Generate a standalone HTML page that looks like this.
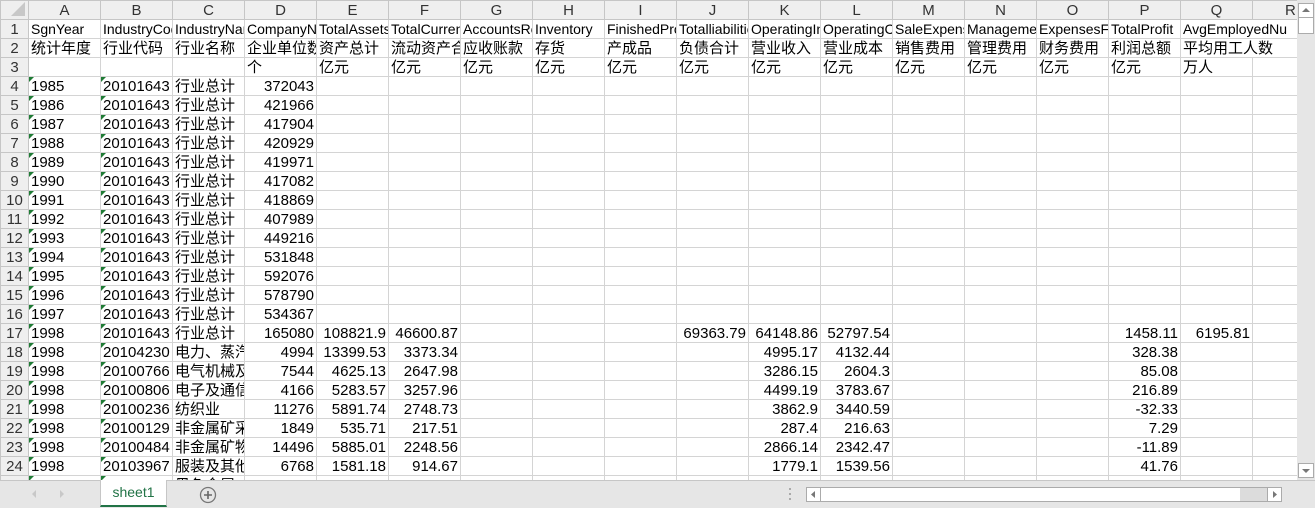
<!DOCTYPE html>
<html><head><meta charset="utf-8">
<style>
*{box-sizing:border-box;margin:0;padding:0}
body{width:1315px;height:508px;overflow:hidden;background:#fff;font-family:"Liberation Sans","Noto Sans CJK SC",sans-serif;font-size:14px;color:#000;position:relative}
#grid{position:absolute;left:0;top:0;width:1297px;height:480px;overflow:hidden}
table{border-collapse:collapse;table-layout:fixed;width:1324px}
td{height:19px;border:1px solid #d4d4d4;white-space:nowrap;overflow:hidden;padding:0 2px;line-height:17px;position:relative}
tr.h td{height:19px;background:#efefef;color:#333;text-align:center;border-color:#c6c6c6;font-size:15px}
td.rn{background:#efefef;color:#333;text-align:center;border-color:#c6c6c6;padding:0;font-size:15px}
td.r{text-align:right;font-size:15px;padding-right:2px}
td.g::before{content:"";position:absolute;left:0;top:0;border-top:5px solid #1e7b34;border-right:5px solid transparent}
.c{font-size:15px}
.n{font-size:15px}
#bar{position:absolute;left:0;top:480px;width:1315px;height:28px;background:#e6e6e6;border-top:1px solid #c6c6c6}
#tab{position:absolute;left:100px;top:-1px;width:67px;height:27px;background:#fff;border-left:1px solid #c6c6c6;border-right:1px solid #c6c6c6;border-bottom:2px solid #217346;color:#217346;font-size:14px;text-align:center;line-height:24px}
#vs{position:absolute;left:1297px;top:0;width:18px;height:480px;background:#e6e6e6}
.btn{position:absolute;background:#fff;border:1px solid #ababab}
</style></head><body>
<div id="grid"><table>
<colgroup><col style="width:28px"><col style="width:72px"><col style="width:72px"><col style="width:72px"><col style="width:72px"><col style="width:72px"><col style="width:72px"><col style="width:72px"><col style="width:72px"><col style="width:72px"><col style="width:72px"><col style="width:72px"><col style="width:72px"><col style="width:72px"><col style="width:72px"><col style="width:72px"><col style="width:72px"><col style="width:72px"><col style="width:72px"></colgroup>
<tr class="h"><td style="background:#efefef"><svg width="14" height="14" style="position:absolute;right:3px;bottom:3px"><polygon points="14,0 14,14 0,14" fill="#c8c8c8"/></svg></td><td>A</td><td>B</td><td>C</td><td>D</td><td>E</td><td>F</td><td>G</td><td>H</td><td>I</td><td>J</td><td>K</td><td>L</td><td>M</td><td>N</td><td>O</td><td>P</td><td>Q</td><td style="text-align:left;padding-left:32px">R</td></tr>
<tr><td class="rn">1</td><td>SgnYear</td><td>IndustryCode</td><td>IndustryName</td><td>CompanyNum</td><td>TotalAssets</td><td>TotalCurrentAssets</td><td>AccountsReceivable</td><td>Inventory</td><td>FinishedProducts</td><td>Totalliabilities</td><td>OperatingIncome</td><td>OperatingCost</td><td>SaleExpenses</td><td>ManagementExpenses</td><td>ExpensesFinance</td><td>TotalProfit</td><td colspan="2">AvgEmployedNu</td></tr>
<tr class="c"><td class="rn">2</td><td>统计年度</td><td>行业代码</td><td>行业名称</td><td>企业单位数</td><td>资产总计</td><td>流动资产合计</td><td>应收账款</td><td>存货</td><td>产成品</td><td>负债合计</td><td>营业收入</td><td>营业成本</td><td>销售费用</td><td>管理费用</td><td>财务费用</td><td>利润总额</td><td colspan="2">平均用工人数</td></tr>
<tr class="c"><td class="rn">3</td><td></td><td></td><td></td><td>个</td><td>亿元</td><td>亿元</td><td>亿元</td><td>亿元</td><td>亿元</td><td>亿元</td><td>亿元</td><td>亿元</td><td>亿元</td><td>亿元</td><td>亿元</td><td>亿元</td><td>万人</td><td></td></tr>
<tr class="c"><td class="rn">4</td><td class="g n">1985</td><td class="g n">20101643</td><td>行业总计</td><td class="r">372043</td><td></td><td></td><td></td><td></td><td></td><td></td><td></td><td></td><td></td><td></td><td></td><td></td><td></td><td></td></tr>
<tr class="c"><td class="rn">5</td><td class="g n">1986</td><td class="g n">20101643</td><td>行业总计</td><td class="r">421966</td><td></td><td></td><td></td><td></td><td></td><td></td><td></td><td></td><td></td><td></td><td></td><td></td><td></td><td></td></tr>
<tr class="c"><td class="rn">6</td><td class="g n">1987</td><td class="g n">20101643</td><td>行业总计</td><td class="r">417904</td><td></td><td></td><td></td><td></td><td></td><td></td><td></td><td></td><td></td><td></td><td></td><td></td><td></td><td></td></tr>
<tr class="c"><td class="rn">7</td><td class="g n">1988</td><td class="g n">20101643</td><td>行业总计</td><td class="r">420929</td><td></td><td></td><td></td><td></td><td></td><td></td><td></td><td></td><td></td><td></td><td></td><td></td><td></td><td></td></tr>
<tr class="c"><td class="rn">8</td><td class="g n">1989</td><td class="g n">20101643</td><td>行业总计</td><td class="r">419971</td><td></td><td></td><td></td><td></td><td></td><td></td><td></td><td></td><td></td><td></td><td></td><td></td><td></td><td></td></tr>
<tr class="c"><td class="rn">9</td><td class="g n">1990</td><td class="g n">20101643</td><td>行业总计</td><td class="r">417082</td><td></td><td></td><td></td><td></td><td></td><td></td><td></td><td></td><td></td><td></td><td></td><td></td><td></td><td></td></tr>
<tr class="c"><td class="rn">10</td><td class="g n">1991</td><td class="g n">20101643</td><td>行业总计</td><td class="r">418869</td><td></td><td></td><td></td><td></td><td></td><td></td><td></td><td></td><td></td><td></td><td></td><td></td><td></td><td></td></tr>
<tr class="c"><td class="rn">11</td><td class="g n">1992</td><td class="g n">20101643</td><td>行业总计</td><td class="r">407989</td><td></td><td></td><td></td><td></td><td></td><td></td><td></td><td></td><td></td><td></td><td></td><td></td><td></td><td></td></tr>
<tr class="c"><td class="rn">12</td><td class="g n">1993</td><td class="g n">20101643</td><td>行业总计</td><td class="r">449216</td><td></td><td></td><td></td><td></td><td></td><td></td><td></td><td></td><td></td><td></td><td></td><td></td><td></td><td></td></tr>
<tr class="c"><td class="rn">13</td><td class="g n">1994</td><td class="g n">20101643</td><td>行业总计</td><td class="r">531848</td><td></td><td></td><td></td><td></td><td></td><td></td><td></td><td></td><td></td><td></td><td></td><td></td><td></td><td></td></tr>
<tr class="c"><td class="rn">14</td><td class="g n">1995</td><td class="g n">20101643</td><td>行业总计</td><td class="r">592076</td><td></td><td></td><td></td><td></td><td></td><td></td><td></td><td></td><td></td><td></td><td></td><td></td><td></td><td></td></tr>
<tr class="c"><td class="rn">15</td><td class="g n">1996</td><td class="g n">20101643</td><td>行业总计</td><td class="r">578790</td><td></td><td></td><td></td><td></td><td></td><td></td><td></td><td></td><td></td><td></td><td></td><td></td><td></td><td></td></tr>
<tr class="c"><td class="rn">16</td><td class="g n">1997</td><td class="g n">20101643</td><td>行业总计</td><td class="r">534367</td><td></td><td></td><td></td><td></td><td></td><td></td><td></td><td></td><td></td><td></td><td></td><td></td><td></td><td></td></tr>
<tr class="c"><td class="rn">17</td><td class="g n">1998</td><td class="g n">20101643</td><td>行业总计</td><td class="r">165080</td><td class="r">108821.9</td><td class="r">46600.87</td><td></td><td></td><td></td><td class="r">69363.79</td><td class="r">64148.86</td><td class="r">52797.54</td><td></td><td></td><td></td><td class="r">1458.11</td><td class="r">6195.81</td><td></td></tr>
<tr class="c"><td class="rn">18</td><td class="g n">1998</td><td class="g n">20104230</td><td>电力、蒸汽</td><td class="r">4994</td><td class="r">13399.53</td><td class="r">3373.34</td><td></td><td></td><td></td><td></td><td class="r">4995.17</td><td class="r">4132.44</td><td></td><td></td><td></td><td class="r">328.38</td><td></td><td></td></tr>
<tr class="c"><td class="rn">19</td><td class="g n">1998</td><td class="g n">20100766</td><td>电气机械及</td><td class="r">7544</td><td class="r">4625.13</td><td class="r">2647.98</td><td></td><td></td><td></td><td></td><td class="r">3286.15</td><td class="r">2604.3</td><td></td><td></td><td></td><td class="r">85.08</td><td></td><td></td></tr>
<tr class="c"><td class="rn">20</td><td class="g n">1998</td><td class="g n">20100806</td><td>电子及通信</td><td class="r">4166</td><td class="r">5283.57</td><td class="r">3257.96</td><td></td><td></td><td></td><td></td><td class="r">4499.19</td><td class="r">3783.67</td><td></td><td></td><td></td><td class="r">216.89</td><td></td><td></td></tr>
<tr class="c"><td class="rn">21</td><td class="g n">1998</td><td class="g n">20100236</td><td>纺织业</td><td class="r">11276</td><td class="r">5891.74</td><td class="r">2748.73</td><td></td><td></td><td></td><td></td><td class="r">3862.9</td><td class="r">3440.59</td><td></td><td></td><td></td><td class="r">-32.33</td><td></td><td></td></tr>
<tr class="c"><td class="rn">22</td><td class="g n">1998</td><td class="g n">20100129</td><td>非金属矿采</td><td class="r">1849</td><td class="r">535.71</td><td class="r">217.51</td><td></td><td></td><td></td><td></td><td class="r">287.4</td><td class="r">216.63</td><td></td><td></td><td></td><td class="r">7.29</td><td></td><td></td></tr>
<tr class="c"><td class="rn">23</td><td class="g n">1998</td><td class="g n">20100484</td><td>非金属矿物</td><td class="r">14496</td><td class="r">5885.01</td><td class="r">2248.56</td><td></td><td></td><td></td><td></td><td class="r">2866.14</td><td class="r">2342.47</td><td></td><td></td><td></td><td class="r">-11.89</td><td></td><td></td></tr>
<tr class="c"><td class="rn">24</td><td class="g n">1998</td><td class="g n">20103967</td><td>服装及其他</td><td class="r">6768</td><td class="r">1581.18</td><td class="r">914.67</td><td></td><td></td><td></td><td></td><td class="r">1779.1</td><td class="r">1539.56</td><td></td><td></td><td></td><td class="r">41.76</td><td></td><td></td></tr>
<tr class="c"><td class="rn">25</td><td class="g n">1998</td><td class="g n">20101234</td><td>黑色金属</td><td class="r">1000</td><td></td><td></td><td></td><td></td><td></td><td></td><td></td><td></td><td></td><td></td><td></td><td></td><td></td><td></td></tr>
</table></div>
<div id="vs">
<div class="btn" style="left:1px;top:3px;width:16px;height:15px"><svg width="14" height="13"><polygon points="3,8 11,8 7,4" fill="#777"/></svg></div>
<div class="btn" style="left:1px;top:17px;width:16px;height:17px"></div>
<div class="btn" style="left:1px;top:463px;width:16px;height:15px"><svg width="14" height="13"><polygon points="3,5 11,5 7,9" fill="#777"/></svg></div>
</div>
<div id="bar">
<svg width="80" height="27" style="position:absolute;left:20px;top:0"><polygon points="12,13 16,9 16,17" fill="#c8c8c8"/><polygon points="40,9 44,13 40,17" fill="#c8c8c8"/></svg>
<div id="tab">sheet1</div>
<svg width="18" height="18" style="position:absolute;left:199px;top:5px"><circle cx="9" cy="9" r="7.5" fill="none" stroke="#777" stroke-width="1.3"/><path d="M5 9H13M9 5V13" stroke="#666" stroke-width="1.6"/></svg>
<svg width="4" height="14" style="position:absolute;left:788px;top:7px"><rect x="1" y="0" width="2" height="2" fill="#aaa"/><rect x="1" y="5" width="2" height="2" fill="#aaa"/><rect x="1" y="10" width="2" height="2" fill="#aaa"/></svg>
<div class="btn" style="left:806px;top:6px;width:476px;height:15px;border-color:#ababab"></div>
<div style="position:absolute;left:1240px;top:7px;width:28px;height:13px;background:#dcdcdc"></div>
<div class="btn" style="left:806px;top:6px;width:15px;height:15px"><svg width="13" height="13"><polygon points="4,6.5 8,3 8,10" fill="#777"/></svg></div>
<div class="btn" style="left:1267px;top:6px;width:15px;height:15px"><svg width="13" height="13"><polygon points="5,3 9,6.5 5,10" fill="#777"/></svg></div>
</div>
</body></html>
